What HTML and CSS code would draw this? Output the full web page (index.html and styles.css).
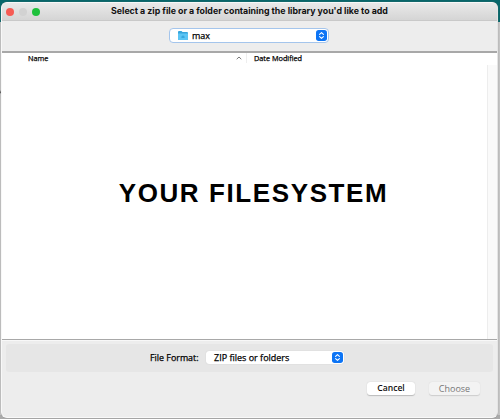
FILE: index.html
```
<!DOCTYPE html>
<html lang="en">
<head>
<meta charset="utf-8">
<title>Select a library</title>
<link rel="stylesheet" href="styles.css">
</head>
<body>
<svg class="backdrop-mark" viewBox="0 0 2 5"><path d="M0 4.5L2 0" stroke="#555" fill="none"/></svg>
<main class="window">
  <header class="titlebar">
    <div class="lights"><i class="light close"></i><i class="light minimize"></i><i class="light expand"></i></div>
    <h1 class="title">Select a zip file or a folder containing the library you'd like to add</h1>
  </header>
  <div class="location">
    <div class="select folder-select">
      <svg class="folder" viewBox="0 0 10 9"><path d="M0 1Q0 0 1 0H3.5L4.5 1H9Q10 1 10 2V8Q10 9 9 9H1Q0 9 0 8Z" fill="#36a5dc"/><path d="M0 2.5H10V8Q10 9 9 9H1Q0 9 0 8Z" fill="#5cc5f4"/><path d="M3.4 5.6L5 4.2L6.6 5.6V7H3.4Z" fill="#38a8df"/></svg>
      <span class="folder-name">max</span>
      <svg class="stepper" viewBox="0 0 11 11"><rect width="11" height="11" rx="2.7" fill="#0c74f5"/><path d="M3.6 4.3L5.5 2.6L7.4 4.3M3.6 6.7L5.5 8.4L7.4 6.7" fill="none" stroke="#fff" stroke-width="1.1" stroke-linecap="round" stroke-linejoin="round"/></svg>
    </div>
  </div>
  <section class="files">
    <div class="columns">
      <span class="col-name">Name</span>
      <svg class="sort" viewBox="0 0 6 4"><path d="M.7 3.2L3 1L5.3 3.2" fill="none" stroke="#777" stroke-width="1"/></svg>
      <span class="col-date">Date Modified</span>
    </div>
    <div class="content"><p class="message">YOUR FILESYSTEM</p></div>
    <div class="scroll"></div>
  </section>
  <footer class="footer">
    <div class="format">
      <span class="format-label">File Format:</span>
      <div class="select format-select">
        <span class="format-value">ZIP files or folders</span>
        <svg class="stepper" viewBox="0 0 11 11"><rect width="11" height="11" rx="2.7" fill="#0c74f5"/><path d="M3.6 4.3L5.5 2.6L7.4 4.3M3.6 6.7L5.5 8.4L7.4 6.7" fill="none" stroke="#fff" stroke-width="1.1" stroke-linecap="round" stroke-linejoin="round"/></svg>
      </div>
    </div>
    <div class="actions">
      <button class="button">Cancel</button>
      <button class="button choose" disabled>Choose</button>
    </div>
  </footer>
</main>
</body>
</html>
```
FILE: styles.css
```
* { box-sizing: border-box; }
body {
  margin: 0;
  height: 419px;
  padding: 2px 1px 1px;
  overflow: hidden;
  background: linear-gradient(#08666a 0 22px, #c4c4c4 22px 415px, #aaa 415px);
  font-family: "Open Sans", "Noto Sans", sans-serif;
  color: #111;
}
.backdrop-mark { position: absolute; left: 0; top: 89px; width: 2px; height: 5px; }
.window {
  position: relative;
  display: flex;
  flex-direction: column;
  width: 497px;
  height: 416px;
  border: 1px solid #f8f8f8;
  border-right-color: #e5e5e5;
  border-radius: 6px;
  overflow: hidden;
  background: #ededed;
  box-shadow: 0 0 1px #777;
}
.titlebar {
  display: flex;
  align-items: center;
  height: 18px;
  flex: none;
  background: linear-gradient(#e9e9e9, #d5d5d5);
  border-bottom: 1px solid #c9c9c9;
}
.lights { display: flex; gap: 5px; width: 109px; padding-left: 4px; }
.light { width: 8px; height: 8px; border-radius: 50%; }
.close { background: #f65b54; }
.minimize { background: #d2d2d2; }
.expand { background: #1fc13c; }
.title {
  margin: 0;
  padding-bottom: 1px;
  font: bold 8.8px/16px Inter, sans-serif;
  white-space: nowrap;
}
.location {
  display: flex;
  flex: none;
  height: 30px;
  padding: 7px 0 0 167px;
}
.select { display: flex; align-items: center; background: #fff; }
.folder-select {
  width: 160px;
  height: 15px;
  padding: 0 1px 0 8px;
  border: 1px solid #a4c5ec;
  border-radius: 4px;
}
.folder { width: 10px; height: 9px; }
.folder-name { margin-left: 4px; font: 400 9px/12px "Open Sans", sans-serif; }
.stepper { width: 11px; height: 11px; margin-left: auto; flex: none; }
.folder-name, .columns, .format-label, .format-value {
  color: #000;
  -webkit-text-stroke: .25px currentColor;
}
.files {
  display: grid;
  grid-template: 12px 1fr / 1fr 10px;
  height: 289px;
  flex: none;
  margin: 0 -1px;
  border: 1px solid #a8a8a8;
  border-width: 2px 1px 1px;
  background: #fff;
}
.columns {
  display: flex;
  align-items: center;
  grid-column: 1 / 3;
  padding: 0 0 3px 26px;
  font: 400 7.3px/10px "Open Sans", sans-serif;
}
.col-name { width: 208px; }
.sort { width: 6px; height: 4px; }
.col-date { margin-left: 4px; padding-left: 7px; border-left: 1px solid #eee; }
.content { display: flex; justify-content: center; padding: 113px 0 0 18px; }
.message {
  margin: 0;
  font: bold 26px/30px "Liberation Sans", Arial, sans-serif;
  letter-spacing: 1.6px;
  color: #000;
  white-space: nowrap;
}
.scroll { background: #fafafa; border-left: 1px solid #ededed; }
.footer { flex: 1; padding: 3px 4px 0; border-top: 1px solid #f8f8f8; }
.format {
  display: flex;
  align-items: center;
  height: 28px;
  padding: 0 0 1px 144px;
  border-radius: 3px;
  background: #e6e6e6;
}
.format-label { width: 56px; font: 400 8.9px/12px "Open Sans", sans-serif; white-space: nowrap; }
.format-select {
  width: 138px;
  height: 13px;
  padding: 0 1px 0 8px;
  border-radius: 3px;
  box-shadow: 0 0 1px #bbb;
}
.format-value { font: 400 9px/12px "Open Sans", sans-serif; }
.actions { display: flex; justify-content: flex-end; gap: 14px; padding: 10px 13px 0 0; }
.button {
  width: 48px;
  height: 13px;
  padding: 0;
  border: 0;
  border-radius: 3px;
  background: #fff;
  box-shadow: 0 .5px 1px #bbb;
  font: 600 8.6px/13px "Open Sans", sans-serif;
  color: #111;
}
.choose { width: 51px; background: #f3f3f3; box-shadow: 0 .5px 1px #ccc; font-weight: 400; font-size: 9px; color: #777; }
```
